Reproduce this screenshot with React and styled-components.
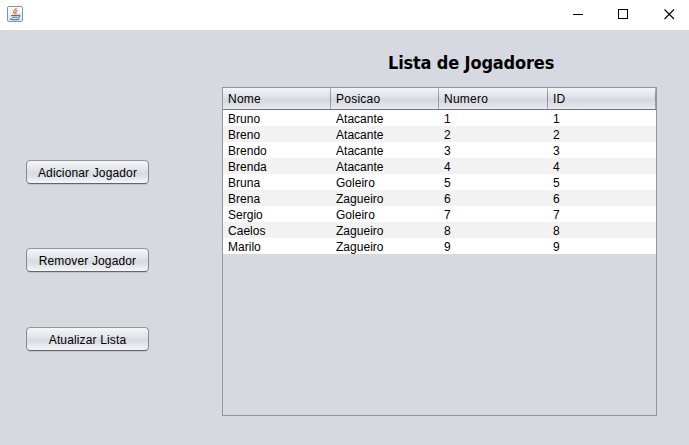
import React from "react";
import styled, { createGlobalStyle } from "styled-components";

const GlobalStyle = createGlobalStyle`
  * { box-sizing: border-box; }
  body { margin: 0; background: #d6d9df; }
`;

const Window = styled.div`
  width: 689px;
  height: 445px;
  display: flex;
  flex-direction: column;
  overflow: hidden;
  background: #d6d9df;
  color: #000;
  font: 12px/16px "Liberation Sans", Arial, sans-serif;
`;

const TitleBar = styled.header`
  height: 30px;
  flex: none;
  display: flex;
  justify-content: space-between;
  background: #fff;
`;

const AppIcon = styled.svg`
  margin: 6px 0 0 7px;
`;

const WindowControls = styled.div`
  display: flex;
`;

const ControlButton = styled.button`
  width: ${(p) => p.$width}px;
  height: 29px;
  padding: 0;
  border: 0;
  background: none;
  display: flex;
  justify-content: center;
  align-items: center;
`;

const Content = styled.main`
  flex: 1;
  display: flex;
`;

const Actions = styled.nav`
  width: 222px;
  padding: 130px 0 0 26px;
  display: flex;
  flex-direction: column;
`;

const ActionButton = styled.button`
  width: 123px;
  height: 24px;
  margin-bottom: ${(p) => p.$gap}px;
  padding: 2px 0 0;
  border: 1px solid;
  border-color: #94969a #85888e #63656a;
  border-radius: 4.5px;
  background: linear-gradient(#f5f6f8 0%, #e5e7eb 35%, #d7dae0 58%, #dfe2e8 70%, #f4f6fb 100%);
  box-shadow: 0 1px 0 #c2c5cb;
  color: #000;
  font: inherit;
  line-height: 20px;
  letter-spacing: 0.14px;
  white-space: nowrap;
`;

const ListPanel = styled.section`
  width: 435px;
  display: flex;
  flex-direction: column;
`;

const Heading = styled.h1`
  margin: 20px 0 0 166px;
  height: 37px;
  font: bold 18px/25px "DejaVu Sans Condensed", "DejaVu Sans", sans-serif;
  font-stretch: condensed;
  letter-spacing: -0.16px;
  white-space: nowrap;
`;

const TablePane = styled.div`
  height: 329px;
  border: 1px solid #9297a1;
`;

const Row = styled.div`
  display: grid;
  grid-template-columns: 108px 108px 109px 108px;
  height: 16px;
  background: ${(p) => (p.$striped ? "#f2f2f2" : "#fff")};
`;

const HeaderRow = styled(Row)`
  height: 22px;
  border-bottom: 1px solid #6f7278;
  background: linear-gradient(#f3f4f6 0%, #e1e3e8 40%, #d5d8de 55%, #dcdfe5 78%, #e9edf4 100%);
`;

const Cell = styled.div`
  padding: 1px 0 0 5px;
  line-height: 16px;
  letter-spacing: 0.02px;
  white-space: nowrap;
`;

const HeaderCell = styled(Cell)`
  padding-top: 3px;
  letter-spacing: 0.25px;
  border-right: 1px solid;
  border-image: linear-gradient(#b5b8be, #8a8d94 45%, #a6a9b0) 1;
`;

const columns = ["Nome", "Posicao", "Numero", "ID"];

const players = [
  ["Bruno", "Atacante", 1],
  ["Breno", "Atacante", 2],
  ["Brendo", "Atacante", 3],
  ["Brenda", "Atacante", 4],
  ["Bruna", "Goleiro", 5],
  ["Brena", "Zagueiro", 6],
  ["Sergio", "Goleiro", 7],
  ["Caelos", "Zagueiro", 8],
  ["Marilo", "Zagueiro", 9],
];

function JavaIcon() {
  return (
    <AppIcon width="16" height="16" viewBox="0 0 16 16">
      <defs>
        <linearGradient id="tile" x2="0" y2="1">
          <stop stopColor="#fff" />
          <stop offset="1" stopColor="#dce4ea" />
        </linearGradient>
      </defs>
      <rect x=".5" y=".5" width="15" height="15" rx="1.3" fill="url(#tile)" stroke="#7f97aa" />
      <path d="M9.4 2.2C9 4 6 4.8 6.5 6.2 6.8 7 7.6 7.4 7.6 8.4M10.6 4.4C8.9 5.2 8.1 6 8.9 6.8 9.3 7.3 9.1 7.9 8.8 8.4" fill="none" stroke="#ed7d2b" strokeWidth="1.3" />
      <path d="M4 9.5H10.8M5 11.3H10.3M10.8 9.2C13.8 8.6 13.6 11 10.6 11.5" fill="none" stroke="#466f91" strokeWidth="1.1" />
      <path d="M3 12.8C5 14.1 10.5 14.1 12.5 12.8" fill="none" stroke="#466f91" strokeWidth="1.1" />
    </AppIcon>
  );
}

export default function App() {
  return (
    <Window>
      <GlobalStyle />
      <TitleBar>
        <JavaIcon />
        <WindowControls>
          <ControlButton $width={36} aria-label="Minimizar">
            <svg width="10" height="11" shapeRendering="crispEdges">
              <path d="M0 5.5H10" stroke="#000" />
            </svg>
          </ControlButton>
          <ControlButton $width={54} aria-label="Maximizar">
            <svg width="10" height="11" shapeRendering="crispEdges">
              <rect x=".5" y=".5" width="9" height="9" fill="none" stroke="#000" />
            </svg>
          </ControlButton>
          <ControlButton $width={39} aria-label="Fechar">
            <svg width="11" height="11">
              <path d="M.5 .5L10 10M10 .5L.5 10" stroke="#000" strokeWidth="1.1" />
            </svg>
          </ControlButton>
        </WindowControls>
      </TitleBar>
      <Content>
        <Actions>
          <ActionButton $gap={64}>Adicionar Jogador</ActionButton>
          <ActionButton $gap={55}>Remover Jogador</ActionButton>
          <ActionButton $gap={0}>Atualizar Lista</ActionButton>
        </Actions>
        <ListPanel>
          <Heading>Lista de Jogadores</Heading>
          <TablePane>
            <HeaderRow>
              {columns.map((name) => (
                <HeaderCell key={name}>{name}</HeaderCell>
              ))}
            </HeaderRow>
            {players.map(([name, position, number], i) => (
              <Row key={name} $striped={i % 2 === 1}>
                <Cell>{name}</Cell>
                <Cell>{position}</Cell>
                <Cell>{number}</Cell>
                <Cell>{number}</Cell>
              </Row>
            ))}
          </TablePane>
        </ListPanel>
      </Content>
    </Window>
  );
}
